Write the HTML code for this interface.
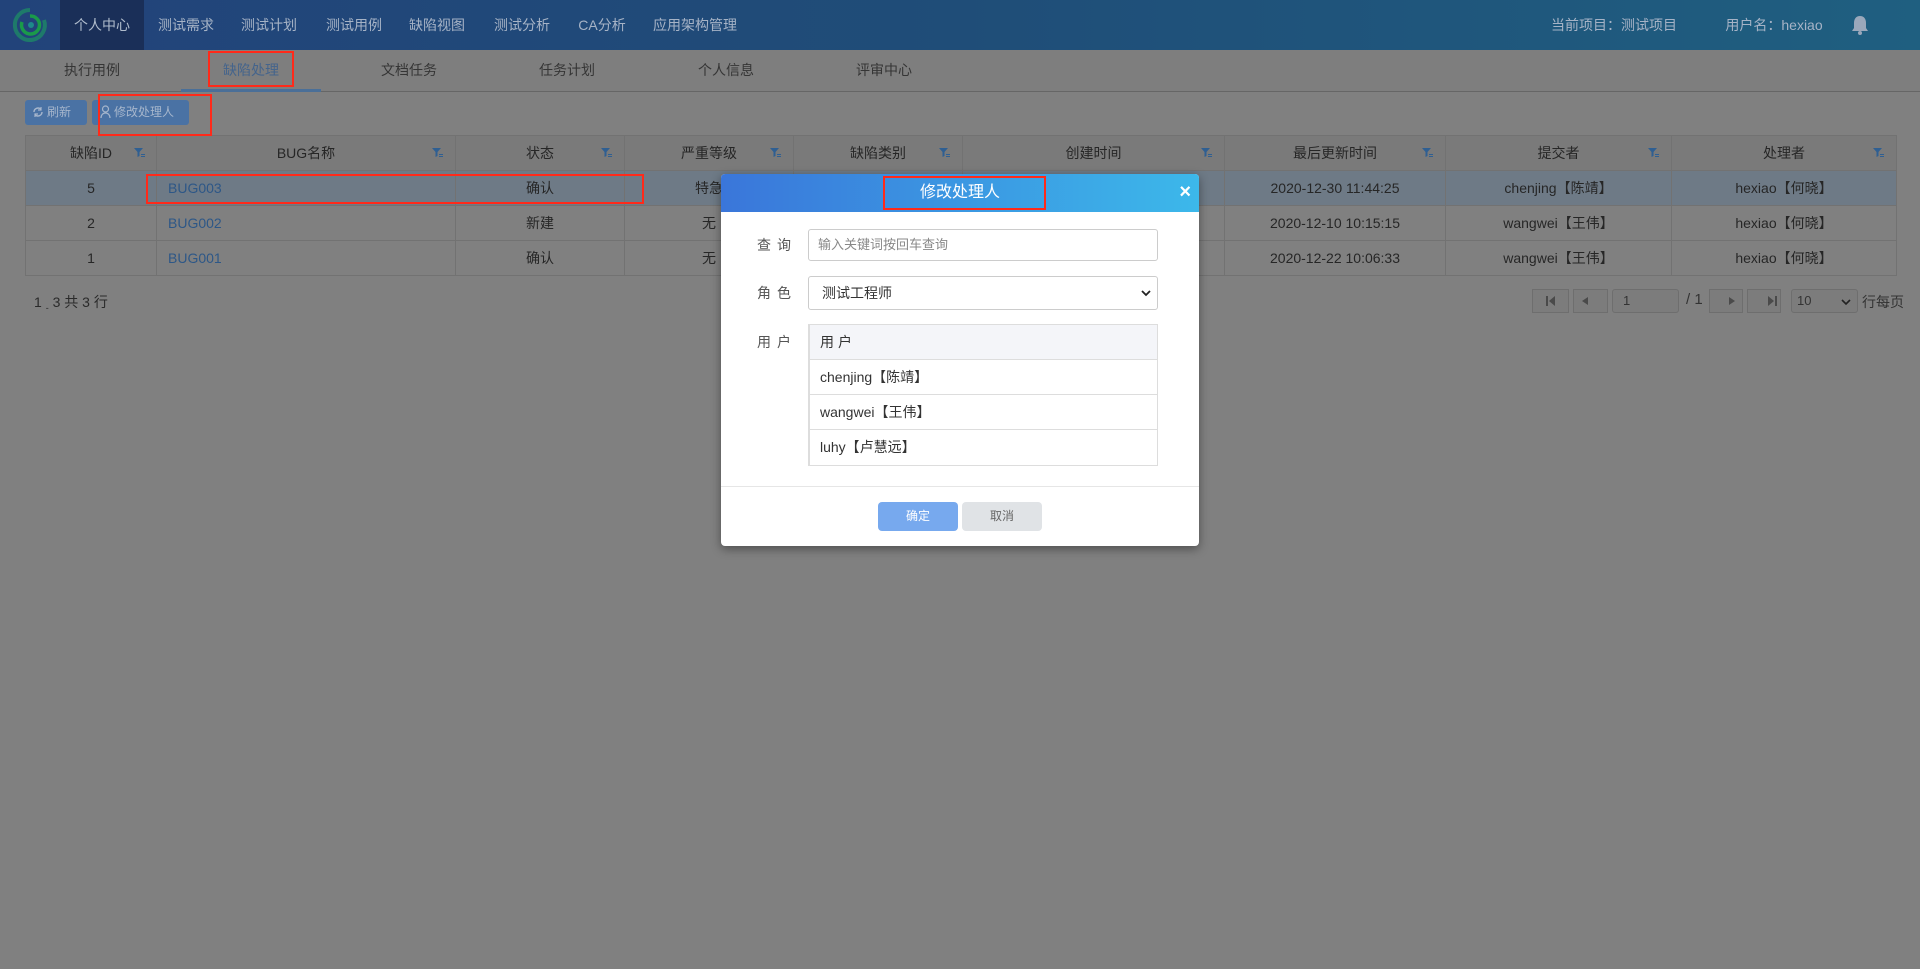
<!DOCTYPE html>
<html><head><meta charset="utf-8"><style>
*{box-sizing:border-box;margin:0;padding:0}
body{width:1920px;height:969px;background:#808080;font-family:"Liberation Sans","Noto Sans CJK SC",sans-serif;position:relative;overflow:hidden;color:#2a2a2a}
.abs{position:absolute}
.nav{left:0;top:0;width:1920px;height:50px;background:linear-gradient(90deg,#22437a,#1f4d78 50%,#1f5f80);box-shadow:0 2px 4px rgba(0,0,0,.3)}
.nav span{position:absolute;top:0;line-height:50px;font-size:14px;color:#a6b3c6;transform:translateX(-50%)}
.sub{left:0;top:50px;width:1920px;height:42px;background:#7e7e7e;border-bottom:1px solid #666}
.sub span{position:absolute;top:0;line-height:40px;font-size:14px;color:#353535;transform:translateX(-50%)}
.btn{height:25px;top:100px;background:#4a72a4;border-radius:3px;color:#a6b6cc;font-size:12px;line-height:25px;padding-left:22px}
table{border-collapse:collapse;font-size:14px;table-layout:fixed}
td,th{border:1px solid #727272;height:35px;text-align:center;font-weight:normal;color:#262626;position:relative}
th{background:#7a7a7a}
.red{border:2px solid #ff2a1a;position:absolute}
.pg{top:289px;height:24px;border:1px solid #6e6e6e;background:#7c7c7c}
</style></head><body>
<div class="abs nav">
 <svg class="abs" style="left:10px;top:6px" width="40" height="38" viewBox="0 0 40 38"><path d="M20 4a15 15 0 1 0 14 10" fill="none" stroke="#1e7a6a" stroke-width="4"/><path d="M20 10a9 9 0 1 1-8 6" fill="none" stroke="#1a9a4a" stroke-width="3.5"/><circle cx="21" cy="19" r="3" fill="#1d8a8a"/></svg>
 <div class="abs" style="left:60px;top:0;width:84px;height:50px;background:#1a2f58"></div>
 <span style="left:102px;color:#b0bccc">个人中心</span><span style="left:186px">测试需求</span><span style="left:269px">测试计划</span><span style="left:354px">测试用例</span><span style="left:437px">缺陷视图</span><span style="left:522px">测试分析</span><span style="left:602px">CA分析</span><span style="left:695px">应用架构管理</span>
 <span style="left:1614px">当前项目：测试项目</span><span style="left:1774px">用户名：hexiao</span>
 <svg class="abs" style="left:1851px;top:15px" width="18" height="20" viewBox="0 0 18 20"><path d="M9 1c-4 0-6 3-6 7v5l-2 3h16l-2-3V8c0-4-2-7-6-7z" fill="#9aa8bb"/><circle cx="9" cy="18" r="2" fill="#9aa8bb"/></svg>
</div>
<div class="abs sub">
 <span style="left:92px">执行用例</span><span style="left:251px;color:#44648c">缺陷处理</span><span style="left:409px">文档任务</span><span style="left:567px">任务计划</span><span style="left:726px">个人信息</span><span style="left:884px">评审中心</span>
 <div class="abs" style="left:181px;top:39px;width:140px;height:3px;background:#4a6f98"></div>
</div>
<div class="abs btn" style="left:25px;width:62px">刷新<svg class="abs" style="left:7px;top:6px" width="12" height="12" viewBox="0 0 12 12"><path d="M2 6a4 4 0 0 1 7-2.6M10 6a4 4 0 0 1-7 2.6" fill="none" stroke="#a6b6cc" stroke-width="1.4"/><path d="M9 1v3H6M3 11V8h3" fill="none" stroke="#a6b6cc" stroke-width="1.2"/></svg></div>
<div class="abs btn" style="left:92px;width:97px">修改处理人<svg class="abs" style="left:8px;top:5px" width="11" height="14" viewBox="0 0 11 14"><circle cx="5.5" cy="4" r="3" fill="none" stroke="#a6b6cc" stroke-width="1.2"/><path d="M1 13c0-3 2-5 4.5-5S10 10 10 13" fill="none" stroke="#a6b6cc" stroke-width="1.2"/></svg></div>
<table class="abs" style="left:25px;top:135px;width:1871px">
<colgroup><col style="width:131px"><col style="width:299px"><col style="width:169px"><col style="width:169px"><col style="width:169px"><col style="width:262px"><col style="width:221px"><col style="width:226px"><col style="width:225px"></colgroup>
<tr><th>缺陷ID</th><th>BUG名称</th><th>状态</th><th>严重等级</th><th>缺陷类别</th><th>创建时间</th><th>最后更新时间</th><th>提交者</th><th>处理者</th></tr>
<tr style="background:#6e7a86"><td>5</td><td style="text-align:left;padding-left:11px;color:#2d5787">BUG003</td><td>确认</td><td>特急</td><td></td><td></td><td>2020-12-30 11:44:25</td><td>chenjing【陈靖】</td><td>hexiao【何晓】</td></tr>
<tr><td>2</td><td style="text-align:left;padding-left:11px;color:#2d5787">BUG002</td><td>新建</td><td>无</td><td></td><td></td><td>2020-12-10 10:15:15</td><td>wangwei【王伟】</td><td>hexiao【何晓】</td></tr>
<tr><td>1</td><td style="text-align:left;padding-left:11px;color:#2d5787">BUG001</td><td>确认</td><td>无</td><td></td><td></td><td>2020-12-22 10:06:33</td><td>wangwei【王伟】</td><td>hexiao【何晓】</td></tr>
</table>
<svg class="abs" width="1920" height="20" style="left:0;top:146px" fill="#2f5f92">
<defs><path id="fi" d="M0 0h9l-3.5 4v4l-2 1V4z M7 6h4v1H7z M7 8h4v1H7z"/></defs>
<use href="#fi" x="134" y="2"/><use href="#fi" x="432" y="2"/><use href="#fi" x="601" y="2"/><use href="#fi" x="770" y="2"/><use href="#fi" x="939" y="2"/><use href="#fi" x="1201" y="2"/><use href="#fi" x="1422" y="2"/><use href="#fi" x="1648" y="2"/><use href="#fi" x="1873" y="2"/>
</svg>
<div class="abs" style="left:34px;top:292px;font-size:14px;color:#2a2a2a">1 <sub style="font-size:9px">-</sub> 3 共 3 行</div>
<div class="abs pg" style="left:1532px;width:37px"></div><div class="abs pg" style="left:1573px;width:35px"></div>
<div class="abs pg" style="left:1612px;width:67px;border-radius:3px;font-size:13px;line-height:22px;padding-left:10px;color:#333">1</div>
<div class="abs" style="left:1686px;top:291px;font-size:15px;color:#333">/ 1</div>
<div class="abs pg" style="left:1709px;width:34px"></div><div class="abs pg" style="left:1747px;width:34px"></div>
<div class="abs pg" style="left:1791px;width:67px;border-radius:3px;font-size:13px;line-height:22px;padding-left:5px;color:#333">10<svg class="abs" style="right:6px;top:8px" width="10" height="8"><path d="M1 2l4 4 4-4" fill="none" stroke="#222" stroke-width="1.6"/></svg></div>
<div class="abs" style="left:1862px;top:292px;font-size:14px;color:#333">行每页</div>
<svg class="abs" style="left:1532px;top:289px" width="260" height="24"><g fill="#4a4a4a"><rect x="14" y="7" width="2" height="10"/><path d="M23 7v10l-6-5z"/><path d="M56 8v8l-6-4z"/><path d="M197 8v8l6-4z"/><path d="M236 7v10l6-5z"/><rect x="243" y="7" width="2" height="10"/></g></svg>
<!-- modal -->
<div class="abs" style="left:721px;top:174px;width:478px;height:372px;background:#fff;border-radius:4px;box-shadow:0 3px 10px rgba(0,0,0,.4);overflow:hidden">
 <div style="height:38px;background:linear-gradient(90deg,#3a76da,#3cb8ea)"></div>
 <div class="abs" style="left:0;top:0;width:478px;line-height:38px;text-align:center;color:#fff;font-size:16px">修改处理人</div>
 <div class="abs" style="right:8px;top:7px;color:#fff;font-size:20px;font-weight:bold">×</div>
 <div class="abs" style="left:36px;top:61px;font-size:14px;color:#555;letter-spacing:6px">查询</div>
 <div class="abs" style="left:87px;top:55px;width:350px;height:32px;border:1px solid #ccc;border-radius:3px;font-size:13px;color:#888;line-height:30px;padding-left:9px">输入关键词按回车查询</div>
 <div class="abs" style="left:36px;top:109px;font-size:14px;color:#555;letter-spacing:6px">角色</div>
 <div class="abs" style="left:87px;top:102px;width:350px;height:34px;border:1px solid #ccc;border-radius:3px;font-size:14px;color:#333;line-height:32px;padding-left:13px">测试工程师<svg class="abs" style="right:6px;top:12px" width="10" height="8"><path d="M1 2l4 4 4-4" fill="none" stroke="#222" stroke-width="1.8"/></svg></div>
 <div class="abs" style="left:36px;top:158px;font-size:14px;color:#555;letter-spacing:6px">用户</div>
 <div class="abs" style="left:87px;top:150px;width:350px;height:142px;border:1px solid #ddd;border-left-width:2px;font-size:14px;color:#333">
  <div style="height:35px;background:#f4f5f9;border-bottom:1px solid #ddd;line-height:35px;padding-left:10px;letter-spacing:4px">用户</div>
  <div style="height:35px;border-bottom:1px solid #ddd;line-height:35px;padding-left:10px">chenjing【陈靖】</div>
  <div style="height:35px;border-bottom:1px solid #ddd;line-height:35px;padding-left:10px">wangwei【王伟】</div>
  <div style="height:34px;line-height:34px;padding-left:10px">luhy【卢慧远】</div>
 </div>
 <div class="abs" style="left:0;top:312px;width:478px;height:1px;background:#e6e6e6"></div>
 <div class="abs" style="left:157px;top:328px;width:80px;height:29px;background:#77a9ee;border-radius:4px;color:#fff;font-size:12px;line-height:29px;text-align:center">确定</div>
 <div class="abs" style="left:241px;top:328px;width:80px;height:29px;background:#e0e3e6;border-radius:4px;color:#666;font-size:12px;line-height:29px;text-align:center">取消</div>
</div>
<div class="red" style="left:208px;top:51px;width:86px;height:36px"></div>
<div class="red" style="left:98px;top:94px;width:114px;height:42px"></div>
<div class="red" style="left:146px;top:174px;width:498px;height:30px"></div>
<div class="red" style="left:883px;top:176px;width:163px;height:34px"></div>
</body></html>
